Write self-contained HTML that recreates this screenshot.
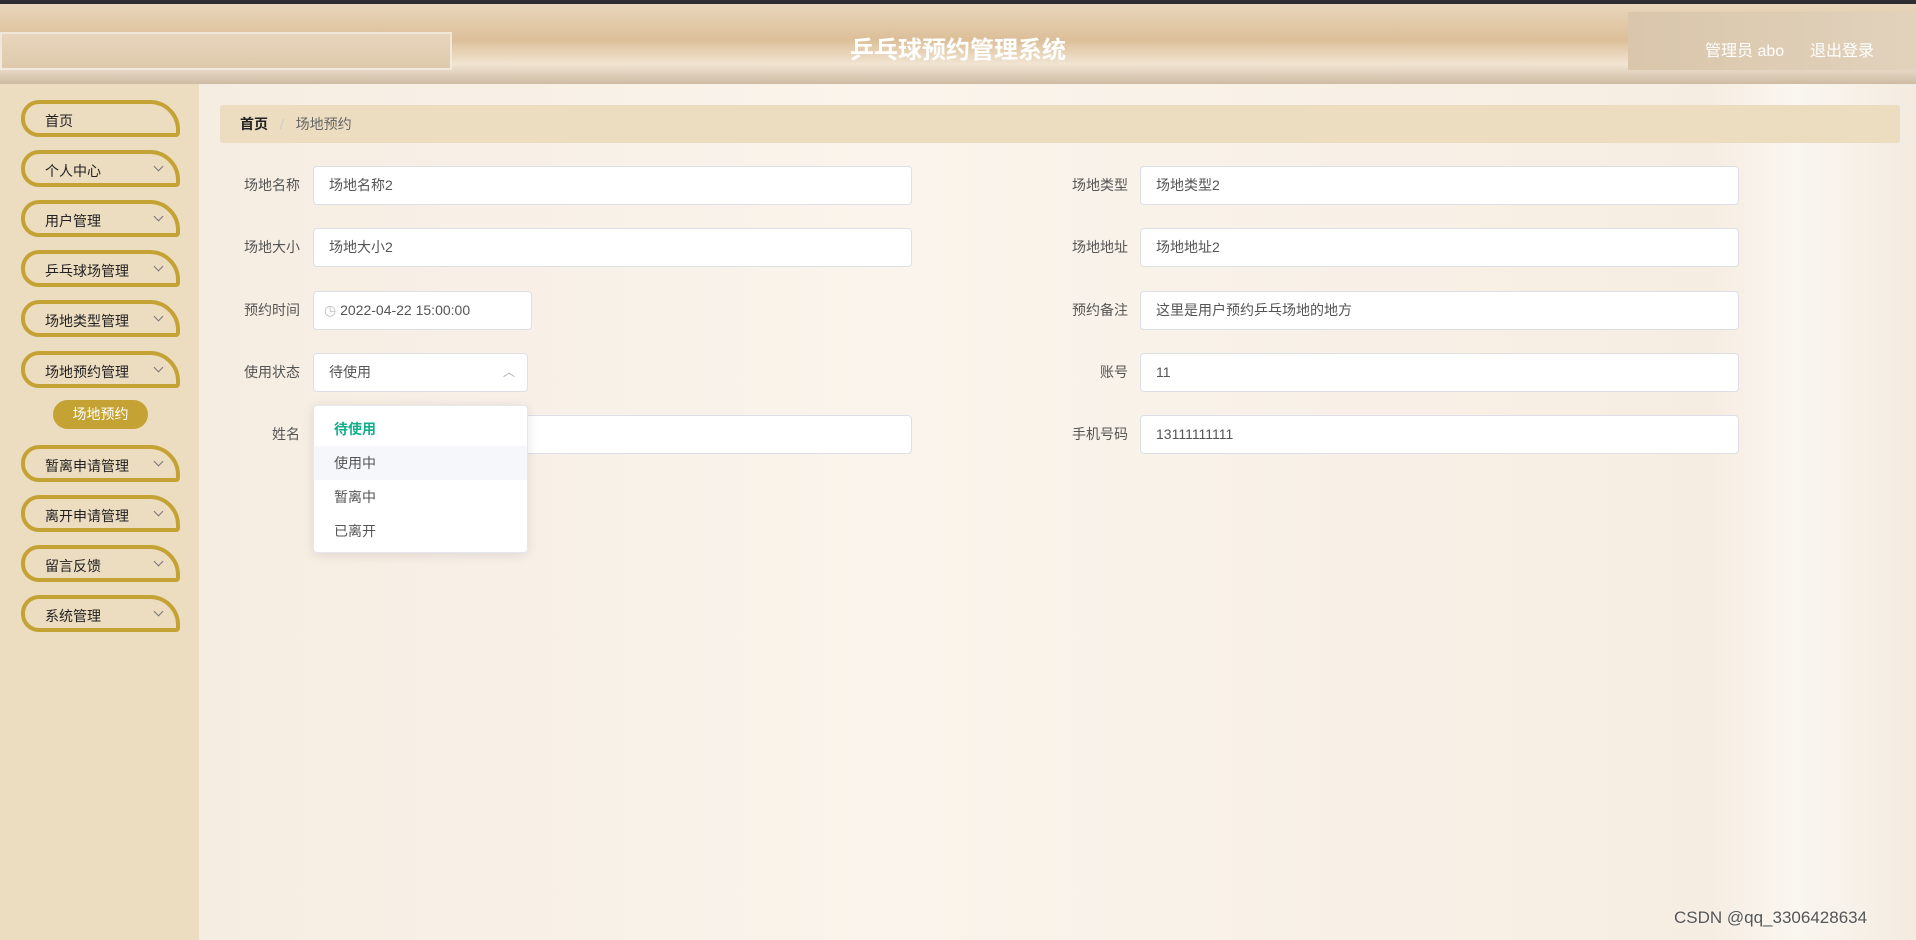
<!DOCTYPE html>
<html><head><meta charset="utf-8"><style>
*{margin:0;padding:0;box-sizing:border-box}
body{width:1916px;height:940px;overflow:hidden;font-family:"Liberation Sans","Noto Sans CJK SC",sans-serif;background:#f7efe4;position:relative}
.top{position:absolute;left:0;top:0;width:1916px;height:4px;background:#2e2e33}
.hdr{position:absolute;left:0;top:4px;width:1916px;height:80px;background:linear-gradient(180deg,#e9d6bc 0%,#dcbf99 45%,#f1e4d2 75%,#cdbba3 100%);box-shadow:0 2px 3px rgba(0,0,0,.35)}
.hdr .bar{position:absolute;left:0;top:28px;width:452px;height:38px;background:linear-gradient(180deg,#ead9c2,#dcc6a6);border:2px solid #f4ece0;opacity:.9}
.hdr .title{position:absolute;left:0;width:1916px;top:26px;text-align:center;color:#fff;font-size:24px;font-weight:bold}
.hdr .user{position:absolute;left:1628px;top:8px;width:288px;height:58px;background:linear-gradient(90deg,#d9c6ab,#e2d2bc)}
.hdr .u{position:absolute;top:33px;color:#fff;font-size:16px}
.side{position:absolute;left:0;top:84px;width:199px;height:856px;background:#ecdcc0}
.mi{position:absolute;left:21px;width:159px;height:37px;border:4px solid #c4a233;border-radius:18px 30px 4px 18px;font-size:14px;color:#222;padding:7px 0 0 20px}
.mi i{position:absolute;right:14px;top:9px;width:7px;height:7px;border-right:1px solid #777;border-bottom:1px solid #777;transform:rotate(45deg)}
.sub{position:absolute;left:53px;top:400px;width:95px;height:29px;background:#c4a233;border-radius:15px;color:#fff;font-size:14px;text-align:center;line-height:29px}
.main{position:absolute;left:199px;top:84px;width:1717px;height:856px;background:linear-gradient(90deg,#f6ede2,#faf4ec 40%,#f8f0e6 70%,#f6ede2 88%,#faf6f0 93%,#f3ebe0)}
.bc{position:absolute;left:220px;top:105px;width:1680px;height:38px;background:#ecdcc0;border-radius:3px;font-size:14px;line-height:38px;padding-left:20px;color:#222}
.bc span{color:#666}
.lab{position:absolute;font-size:14px;color:#555;text-align:right;width:100px;line-height:39px}
.inp{position:absolute;height:39px;background:#fff;border:1px solid #dcdfe6;border-radius:4px;font-size:14px;color:#555;line-height:37px;padding-left:15px}
.dd{position:absolute;left:313px;top:405px;width:215px;height:148px;background:#fff;border:1px solid #e4e7ed;border-radius:4px;box-shadow:0 2px 12px rgba(0,0,0,.1)}
.dd div{height:34px;line-height:34px;padding-left:20px;font-size:14px;color:#555}
.wm{position:absolute;left:1674px;top:908px;font-size:17px;color:#555;text-shadow:0 0 2px #fff}
</style></head><body>
<div class="top"></div>
<div class="hdr"><div class="bar"></div><div class="title">乒乓球预约管理系统</div><div class="user"></div>
<div class="u" style="left:1705px">管理员 abo</div><div class="u" style="left:1810px">退出登录</div></div>
<div class="side">
</div>
<div class="mi" style="top:100px">首页</div>
<div class="mi" style="top:150px">个人中心<i></i></div>
<div class="mi" style="top:200px">用户管理<i></i></div>
<div class="mi" style="top:250px">乒乓球场管理<i></i></div>
<div class="mi" style="top:300px">场地类型管理<i></i></div>
<div class="mi" style="top:351px">场地预约管理<i></i></div>
<div class="sub">场地预约</div>
<div class="mi" style="top:445px">暂离申请管理<i></i></div>
<div class="mi" style="top:495px">离开申请管理<i></i></div>
<div class="mi" style="top:545px">留言反馈<i></i></div>
<div class="mi" style="top:595px">系统管理<i></i></div>
<div class="main"></div>
<div class="bc"><b>首页</b> <span style="color:#ccc;margin:0 8px">/</span> <span>场地预约</span></div>

<div class="lab" style="left:200px;top:166px">场地名称</div><div class="inp" style="left:313px;top:166px;width:599px">场地名称2</div>
<div class="lab" style="left:200px;top:228px">场地大小</div><div class="inp" style="left:313px;top:228px;width:599px">场地大小2</div>
<div class="lab" style="left:200px;top:291px">预约时间</div><div class="inp" style="left:313px;top:291px;width:219px;padding-left:10px"><span style="color:#bbb">◷</span> 2022-04-22 15:00:00</div>
<div class="lab" style="left:200px;top:353px">使用状态</div><div class="inp" style="left:313px;top:353px;width:215px">待使用<span style="position:absolute;right:12px;color:#aaa;font-size:12px">︿</span></div>
<div class="lab" style="left:200px;top:415px">姓名</div><div class="inp" style="left:313px;top:415px;width:599px"></div>

<div class="lab" style="left:1028px;top:166px">场地类型</div><div class="inp" style="left:1140px;top:166px;width:599px">场地类型2</div>
<div class="lab" style="left:1028px;top:228px">场地地址</div><div class="inp" style="left:1140px;top:228px;width:599px">场地地址2</div>
<div class="lab" style="left:1028px;top:291px">预约备注</div><div class="inp" style="left:1140px;top:291px;width:599px">这里是用户预约乒乓场地的地方</div>
<div class="lab" style="left:1028px;top:353px">账号</div><div class="inp" style="left:1140px;top:353px;width:599px">11</div>
<div class="lab" style="left:1028px;top:415px">手机号码</div><div class="inp" style="left:1140px;top:415px;width:599px">13111111111</div>

<div class="dd"><div style="margin-top:6px;color:#13ae8a;font-weight:bold">待使用</div><div style="background:#f5f7fa">使用中</div><div>暂离中</div><div>已离开</div></div>
<div class="wm">CSDN @qq_3306428634</div>
</body></html>
